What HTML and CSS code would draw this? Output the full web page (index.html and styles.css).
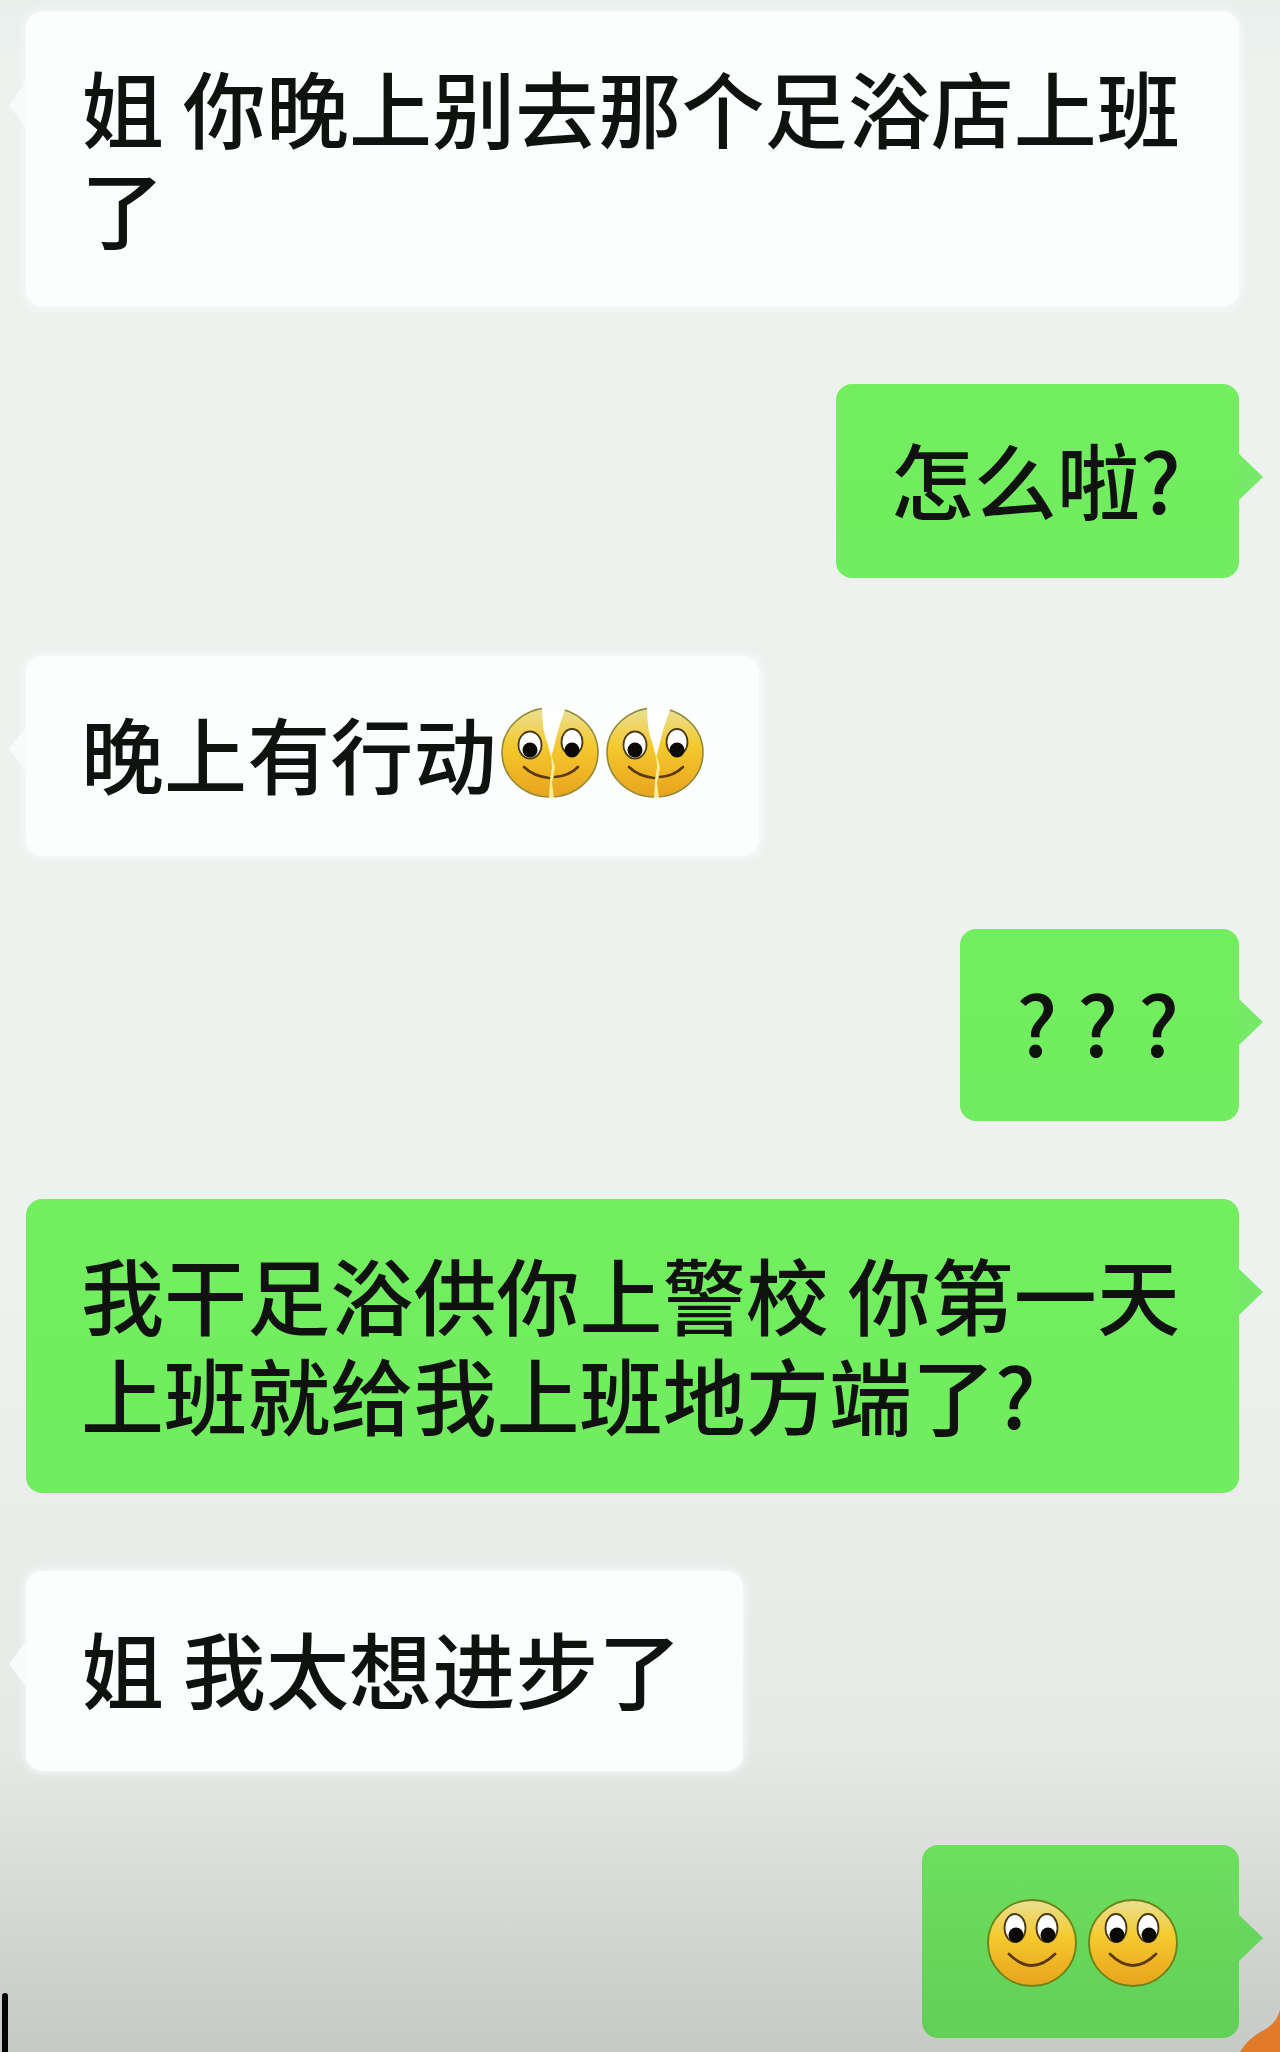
FILE: index.html
```html
<!DOCTYPE html>
<html lang="zh-CN">
<head>
  <meta charset="UTF-8" />
  <meta name="viewport" content="width=device-width, initial-scale=1" />
  <title>聊天记录</title>
  <link rel="stylesheet" href="styles.css">
</head>
<body>

  <svg class="defs" width="0" height="0" aria-hidden="true">
    <defs>
      <linearGradient id="faceFill" x1="0" y1="0" x2="0" y2="1">
        <stop offset="0" stop-color="#eadf96" />
        <stop offset="0.42" stop-color="#f4ca2e" />
        <stop offset="1" stop-color="#e8a31c" />
      </linearGradient>
      <symbol id="smile" viewBox="0 0 90 88">
        <ellipse cx="45" cy="44" rx="44" ry="43" fill="url(#faceFill)" stroke="#6d8418" stroke-width="1.8" />
        <ellipse cx="28" cy="29" rx="10.5" ry="14" fill="#fff" stroke="#4a3a18" stroke-width="1.8" />
        <ellipse cx="60" cy="29" rx="10.5" ry="14" fill="#fff" stroke="#4a3a18" stroke-width="1.8" />
        <circle cx="29" cy="36" r="7.5" fill="#0c0a08" />
        <circle cx="61" cy="36" r="7.5" fill="#0c0a08" />
        <path d="M22 55 Q45 78 68 55" fill="none" stroke="#5c3a0e" stroke-width="2.8" stroke-linecap="round" />
      </symbol>
      <symbol id="brokenSmile" viewBox="0 0 98 91">
        <ellipse cx="49" cy="45.5" rx="48" ry="44.5" fill="url(#faceFill)" stroke="#8f8a3a" stroke-width="1.6" />
        <path d="M41 0 L65 0 Q56 24 53 40 L50 50 L47 38 Q41 24 41 0 Z" fill="#fdfefd" />
        <path d="M50 46 L54 60 L51 76 L53 91 L48 91 L49 74 L51 60 Z" fill="#f8ee9a" />
        <ellipse cx="29" cy="38" rx="11.5" ry="13.5" fill="#fff" stroke="#4a3a18" stroke-width="1.8" />
        <ellipse cx="71" cy="35" rx="10.5" ry="13" fill="#fff" stroke="#4a3a18" stroke-width="1.8" />
        <circle cx="29" cy="43" r="7.5" fill="#0c0a08" />
        <circle cx="71" cy="43" r="7.5" fill="#0c0a08" />
        <path d="M23 60 Q32 69 48 71" fill="none" stroke="#5c3a0e" stroke-width="2.6" stroke-linecap="round" />
        <path d="M54 70 Q68 69 77 60" fill="none" stroke="#5c3a0e" stroke-width="2.6" stroke-linecap="round" />
      </symbol>
    </defs>
  </svg>

  <main class="chat">
    <div class="bubble left wide">姐 你晚上别去那个足浴店上班了</div>
    <div class="bubble right">怎么啦?</div>
    <div class="bubble left tall with-emoji">
      <span>晚上有行动</span>
      <span class="faces broken">
        <svg><use href="#brokenSmile" /></svg>
        <svg><use href="#brokenSmile" /></svg>
      </span>
    </div>
    <div class="bubble right marks">???</div>
    <div class="bubble right wide">我干足浴供你上警校 你第一天上班就给我上班地方端了?</div>
    <div class="bubble left tall roomy">姐 我太想进步了</div>
    <div class="bubble right dim with-emoji">
      <span class="faces">
        <svg><use href="#smile" /></svg>
        <svg><use href="#smile" /></svg>
      </span>
    </div>
  </main>

  <div class="cursor-bar"></div>
  <svg class="corner" viewBox="0 0 40 42" width="40" height="42" aria-hidden="true">
    <path d="M40 0 Q36 14 24 20 Q8 28 0 42 L40 42 Z" fill="#e07b2a" />
  </svg>

</body>
</html>
```

FILE: styles.css
```css
html, body {
  margin: 0;
  height: 2052px;
}
body {
  position: relative;
  overflow: hidden;
  font-family: "Noto Sans CJK SC", "Noto Sans", sans-serif;
  color: #0f120f;
  background: linear-gradient(180deg, #e8f0ec 0, #eef2ef 4%, #eef2ef 62%, #e6e9e6 85%, #c6c9c5 100%);
}
.defs {
  position: absolute;
}

.chat {
  display: flex;
  flex-direction: column;
  gap: 78px;
  padding: 12px 41px 0 26px;
}

.bubble {
  position: relative;
  box-sizing: border-box;
  padding: 44px 58px 50px 55px;
  font-size: 83px;
  font-weight: 500;
  letter-spacing: 0.1px;
  line-height: 100px;
  border-radius: 16px;
}
.bubble::after {
  content: "";
  position: absolute;
  top: 70px;
  border-top: 23px solid transparent;
  border-bottom: 23px solid transparent;
}

.left {
  align-self: flex-start;
  background: #fcfefd;
  box-shadow: 0 0 8px 1px #fafdfc;
}
.left::after {
  left: -17px;
  border-right: 17px solid #f8fbfa;
}
.right {
  align-self: flex-end;
  background: linear-gradient(180deg, #72ee5f, #72ec60);
}
.right::after {
  right: -24px;
  border-left: 24px solid #74ea66;
}

.tall {
  padding-top: 46px;
  padding-bottom: 54px;
}
.roomy {
  padding-right: 62px;
}
.marks {
  margin-top: -5px;
  padding: 42px 40px 50px 56px;
  letter-spacing: 20px;
}
.wide {
  width: 1213px;
  padding-right: 50px;
}
.dim {
  margin-top: -4px;
  padding: 54px 61px 51px 65px;
  background: linear-gradient(180deg, #6cdf5e, #62cf58);
}
.dim::after {
  border-left-color: #66d65c;
}

.with-emoji {
  display: flex;
  align-items: center;
}
.faces {
  display: flex;
  gap: 11px;
}
.faces svg {
  display: block;
  width: 90px;
  height: 88px;
}
.broken {
  gap: 7px;
  margin-left: 4px;
  margin-right: -3px;
}
.broken svg {
  width: 98px;
  height: 91px;
}

.cursor-bar {
  position: absolute;
  left: 2px;
  top: 1993px;
  width: 6px;
  height: 59px;
  background: #050505;
  border-radius: 3px 3px 0 0;
}
.corner {
  position: absolute;
  right: 0;
  bottom: 0;
}
```
